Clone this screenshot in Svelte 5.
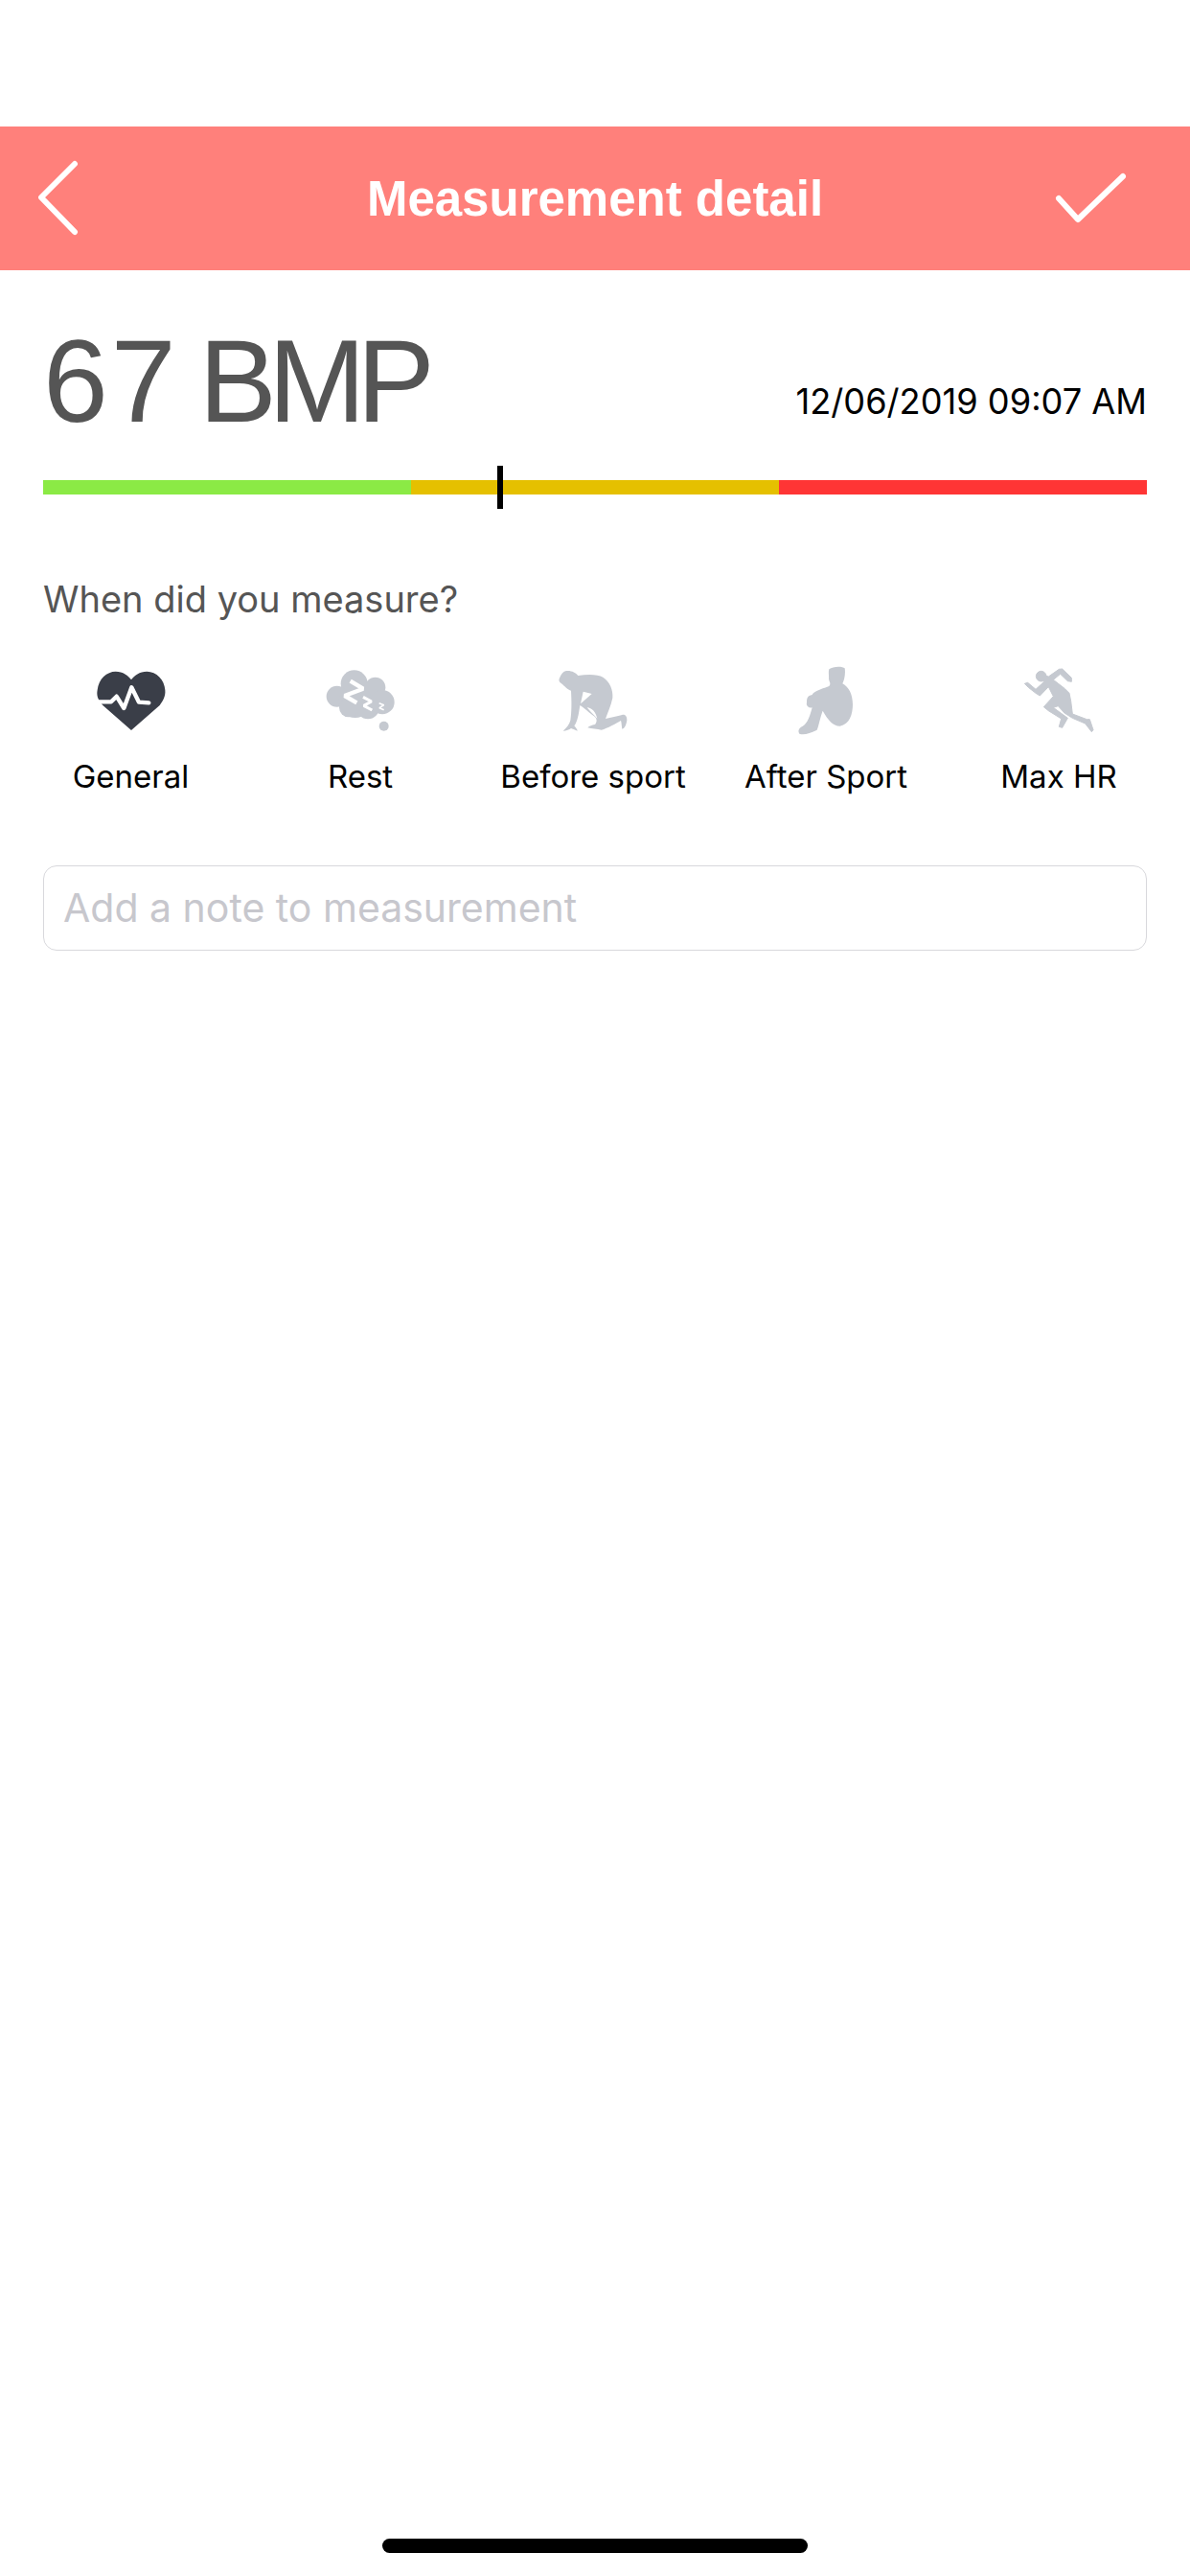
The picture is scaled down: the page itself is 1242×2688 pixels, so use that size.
<script>
	const date = '12/06/2019 09:07 AM'
</script>

<main>
	<div class="status"></div>

	<header>
		<svg class="back" width="50" height="80" viewBox="0 0 50 80">
			<polyline points="38,4 3,39 38,75" />
		</svg>
		<h1>Measurement detail</h1>
		<svg class="check" width="80" height="60" viewBox="0 0 80 60">
			<polyline points="6,30 26,52 73,7" />
		</svg>
	</header>

	<section class="reading">
		<div class="value">67 <span class="unit">BMP</span></div>
		<div class="date">{date}</div>
	</section>

	<div class="gauge">
		<div class="seg green"></div>
		<div class="seg yellow"></div>
		<div class="seg red"></div>
		<div class="marker"></div>
	</div>

	<p class="question">When did you measure?</p>

	<div class="moods">
		<div class="mood">
			<svg viewBox="126 75 270 216">
				<path fill="#3a3e48" d="M261 276L172 198C155 180 152 165 155 150C158 115 185 92 212 92C235 92 252 105 261 118C270 105 287 92 310 92C340 92 365 118 367 150C369 170 360 185 350 198Z" />
				<polyline fill="none" stroke="#fff" stroke-width="13" stroke-linecap="round" stroke-linejoin="round" points="150,187 198,187 215,170 238,207 262,142 285,188 316,190" />
			</svg>
			<span>General</span>
		</div>
		<div class="mood">
			<svg viewBox="846 75 270 216">
				<g fill="#c5c9d0">
					<circle cx="962" cy="130" r="42" />
					<circle cx="908" cy="170" r="33" />
					<circle cx="1028" cy="142" r="32" />
					<circle cx="1050" cy="188" r="38" />
					<circle cx="965" cy="185" r="52" />
					<circle cx="945" cy="205" r="30" />
					<circle cx="1005" cy="205" r="36" />
					<circle cx="1055" cy="263" r="15" />
				</g>
				<g fill="none" stroke="#fff" stroke-linejoin="miter" stroke-miterlimit="2">
					<polyline stroke-width="13" points="950,122 990,146 932,168 970,190" />
					<polyline stroke-width="9" points="990,172 1016,186 992,199 1018,213" />
					<polyline stroke-width="5" points="1040,191 1055,197 1041,206 1055,212" />
				</g>
			</svg>
			<span>Rest</span>
		</div>
		<div class="mood">
			<svg viewBox="74 75 270 216">
				<path fill="#c5c9d0" d="M125 90C140 88 155 95 162 105C190 100 225 100 240 110C262 125 272 150 270 175C265 200 255 220 248 240C265 236 285 232 300 228C308 226 316 232 315 245C313 258 308 270 300 272C298 262 298 250 296 246C280 255 255 270 235 275C222 272 205 272 192 268C198 262 205 260 215 258C222 250 222 240 212 232C198 222 180 205 168 198C164 225 160 250 150 262C155 268 160 274 160 278C150 274 145 272 140 270C135 274 125 278 115 278C125 268 135 258 138 245C142 220 142 190 140 152C130 150 120 138 110 130C102 125 100 118 105 110C110 100 115 92 125 90Z" />
				<path fill="#fff" d="M178 155L205 162L170 193Z" />
				<path fill="#fff" d="M190 205C205 205 218 220 222 240C212 228 200 218 190 205Z" />
			</svg>
			<span>Before sport</span>
		</div>
		<div class="mood">
			<svg viewBox="53 75 270 216">
				<path fill="#c5c9d0" d="M198 85C210 75 240 75 247 82C250 100 245 120 240 130C260 140 272 165 272 195C272 225 262 258 232 263C210 262 195 245 178 215C170 235 165 265 160 275C140 285 120 292 105 287C100 280 102 272 110 266C125 260 135 245 145 205C135 208 125 200 128 190C128 175 130 168 145 165C150 155 165 150 198 138C205 130 198 125 197 115C198 105 195 95 198 85Z" />
			</svg>
			<span>After Sport</span>
		</div>
		<div class="mood">
			<svg viewBox="782 75 270 216">
				<g fill="#c5c9d0" stroke="#c5c9d0" stroke-width="3" stroke-linejoin="round">
					<circle cx="862" cy="107" r="16" />
					<path d="M875 105L885 108L918 85L928 84L957 112L957 124L945 122L922 100L900 118L935 145L950 160L955 185L960 225L1005 242L1014 242L1025 275L1020 281L1000 255L960 238L935 222L915 200L900 205L945 238L928 268L918 265L925 240L885 215L870 203L900 170L885 140L858 168L845 160L822 142L810 130L820 127L845 148L870 125Z" />
				</g>
			</svg>
			<span>Max HR</span>
		</div>
	</div>

	<input class="note" type="text" placeholder="Add a note to measurement" />

	<div class="home"></div>
</main>

<style>
	:global(body) {
		background: #fff;
	}

	main {
		position: relative;
		height: 2688px;
		font-family: Inter, 'Liberation Sans', sans-serif;
		overflow: hidden;
	}

	.status {
		height: 132px;
	}

	header {
		height: 150px;
		background: #ff807b;
		display: grid;
		grid-template-columns: 1fr auto 1fr;
		align-items: center;
		padding: 0 40px;
		box-sizing: border-box;
	}

	header svg polyline {
		fill: none;
		stroke: #fff;
		stroke-width: 6;
		stroke-linecap: round;
		stroke-linejoin: round;
	}

	.check {
		justify-self: end;
		margin-right: 23px;
	}

	h1 {
		margin: 0;
		font-family: 'Liberation Sans', Arial, sans-serif;
		font-weight: 700;
		font-size: 51px;
		color: #fff;
	}

	.reading {
		display: flex;
		justify-content: space-between;
		align-items: flex-end;
		padding: 52px 45px 0 45px;
	}

	.value {
		font-family: 'Liberation Sans', Arial, sans-serif;
		font-size: 122px;
		line-height: 128px;
		letter-spacing: 3px;
		color: #555;
	}

	.unit {
		margin-left: -16px;
		letter-spacing: -9px;
	}

	.date {
		margin-bottom: 21px;
		font-size: 36.2px;
		color: #000;
	}

	.gauge {
		position: relative;
		display: flex;
		height: 15px;
		margin: 39px 45px 0;
	}

	.seg {
		flex: 1;
	}

	.green { background: #8bea45; }
	.yellow { background: #e5c000; }
	.red { background: #ff3535; }

	.marker {
		position: absolute;
		left: 474px;
		top: -15px;
		width: 6px;
		height: 45px;
		background: #000;
	}

	.question {
		margin: 86px 45px 0;
		font-size: 38px;
		color: #555;
	}

	.moods {
		display: grid;
		grid-template-columns: 183px 296px 190px 296px 190px;
		margin: 47px 0 0 45px;
	}

	.mood {
		display: flex;
		flex-direction: column;
		align-items: center;
	}

	.mood svg {
		width: 90px;
		height: 72px;
	}

	.mood span {
		margin-top: 23px;
		font-size: 33px;
		white-space: nowrap;
		color: #000;
	}

	.note {
		display: block;
		box-sizing: border-box;
		width: 1152px;
		height: 89px;
		margin: 73px 45px 0;
		padding: 0 20px 2px;
		border: 1.5px solid #d8d8dc;
		border-radius: 14px;
		background: #fff;
		font-family: Inter, 'Liberation Sans', sans-serif;
		font-size: 41px;
		outline: none;
	}

	.note::placeholder {
		color: #c7c7cd;
		opacity: 1;
	}

	.home {
		position: absolute;
		left: 399px;
		top: 2649px;
		width: 444px;
		height: 15px;
		border-radius: 8px;
		background: #000;
	}
</style>
